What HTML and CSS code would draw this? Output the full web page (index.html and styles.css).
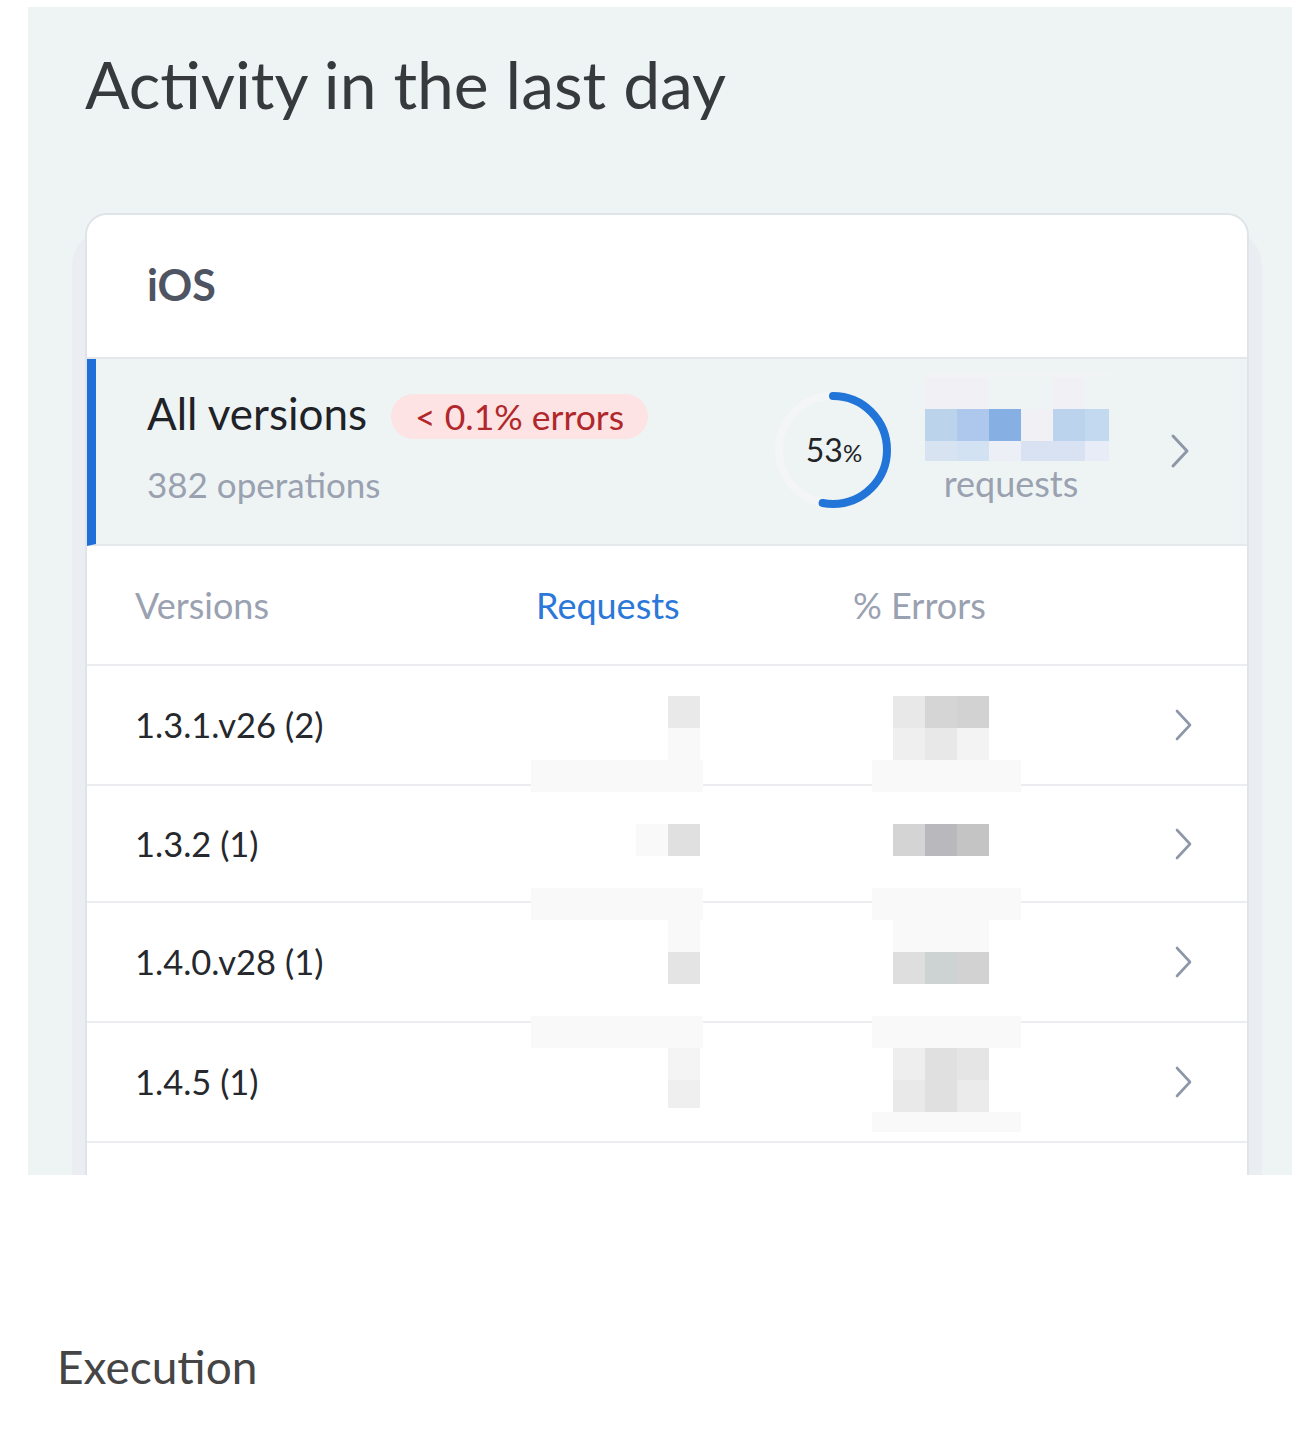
FILE: index.html
```html
<!DOCTYPE html>
<html lang="en">
<head>
<meta charset="utf-8">
<title>Activity</title>
<link rel="stylesheet" href="styles.css">
</head>
<body>
<div class="page">
  <section class="activity">
    <h1 class="activity-title">Activity in the last day</h1>

    <div class="platform-card">
      <div class="platform-head">iOS</div>

      <a class="summary" href="#">
        <div class="summary-main">
          <div class="summary-title">
            <span class="summary-name">All versions</span>
            <span class="error-pill">&lt; 0.1% errors</span>
          </div>
          <div class="summary-sub">382 operations</div>
        </div>

        <div class="donut">
          <svg class="donut-ring" width="120" height="120" viewBox="0 0 120 120">
            <circle cx="60" cy="60" r="54" fill="none" stroke="#f4f5f6" stroke-width="8"/>
            <circle cx="60" cy="60" r="54" fill="none" stroke="#2175d9" stroke-width="8"
                    stroke-linecap="round" stroke-dasharray="179.8 339.3"
                    transform="rotate(-90 60 60)"/>
          </svg>
          <span class="donut-label">53<small>%</small></span>
        </div>

        <div class="summary-requests">
          <svg class="masked" width="184" height="88" viewBox="0 0 184 88">
            <rect x="0" y="0" width="184" height="4" fill="#f1f3f4"/>
            <rect x="0" y="4" width="64" height="32" fill="#f1f1f5"/>
            <rect x="128" y="4" width="32" height="32" fill="#f1f1f5"/>
            <rect x="0" y="36" width="32" height="32" fill="#bcd3ec"/>
            <rect x="32" y="36" width="32" height="32" fill="#adc8ec"/>
            <rect x="64" y="36" width="32" height="32" fill="#86b0e3"/>
            <rect x="96" y="36" width="32" height="32" fill="#f1f1f5"/>
            <rect x="128" y="36" width="32" height="32" fill="#bbd3ec"/>
            <rect x="160" y="36" width="24" height="32" fill="#c3d9f0"/>
            <rect x="0" y="68" width="32" height="20" fill="#d8e3f2"/>
            <rect x="32" y="68" width="32" height="20" fill="#d2e2f2"/>
            <rect x="64" y="68" width="32" height="20" fill="#eceff6"/>
            <rect x="96" y="68" width="64" height="20" fill="#d8e2f2"/>
            <rect x="160" y="68" width="24" height="20" fill="#e8ecf6"/>
          </svg>
          <span class="summary-requests-label">requests</span>
        </div>

        <svg class="chevron chevron-lg" width="20" height="36" viewBox="0 0 20 36">
          <path d="M3 3 L17 18 L3 33" fill="none" stroke="#8e97a8" stroke-width="3" stroke-linecap="round" stroke-linejoin="round"/>
        </svg>
      </a>

      <div class="table-head">
        <span class="col-label">Versions</span>
        <span class="col-label col-label-active">Requests</span>
        <span class="col-label">% Errors</span>
        <span></span>
      </div>

      <a class="version-row" href="#">
        <span class="version-name">1.3.1.v26 (2)</span>
        <span class="version-value"></span>
        <span class="version-value"></span>
        <svg class="chevron" width="18" height="32" viewBox="0 0 18 32"><path d="M3 2 L16 16 L3 30" fill="none" stroke="#8e97a8" stroke-width="2.6" stroke-linecap="round" stroke-linejoin="round"/></svg>
      </a>
      <a class="version-row version-row-compact" href="#">
        <span class="version-name">1.3.2 (1)</span>
        <span class="version-value"></span>
        <span class="version-value"></span>
        <svg class="chevron" width="18" height="32" viewBox="0 0 18 32"><path d="M3 2 L16 16 L3 30" fill="none" stroke="#8e97a8" stroke-width="2.6" stroke-linecap="round" stroke-linejoin="round"/></svg>
      </a>
      <a class="version-row" href="#">
        <span class="version-name">1.4.0.v28 (1)</span>
        <span class="version-value"></span>
        <span class="version-value"></span>
        <svg class="chevron" width="18" height="32" viewBox="0 0 18 32"><path d="M3 2 L16 16 L3 30" fill="none" stroke="#8e97a8" stroke-width="2.6" stroke-linecap="round" stroke-linejoin="round"/></svg>
      </a>
      <a class="version-row" href="#">
        <span class="version-name">1.4.5 (1)</span>
        <span class="version-value"></span>
        <span class="version-value"></span>
        <svg class="chevron" width="18" height="32" viewBox="0 0 18 32"><path d="M3 2 L16 16 L3 30" fill="none" stroke="#8e97a8" stroke-width="2.6" stroke-linecap="round" stroke-linejoin="round"/></svg>
      </a>
      <div class="version-row version-row-more"></div>

      <!-- pixelated mask laid over the request / error figures -->
      <svg class="value-mask" width="1159" height="960" viewBox="0 0 1159 960" aria-hidden="true">
        <rect x="580" y="481" width="32" height="32" fill="#e9e9e9"/>
        <rect x="580" y="513" width="32" height="32" fill="#f9f9f9"/>
        <rect x="443" y="545" width="172" height="32" fill="#f9f9f9"/>
        <rect x="805" y="481" width="32" height="32" fill="#e8e8e8"/>
        <rect x="837" y="481" width="32" height="32" fill="#d5d5d5"/>
        <rect x="869" y="481" width="32" height="32" fill="#d2d2d2"/>
        <rect x="805" y="513" width="32" height="32" fill="#efefef"/>
        <rect x="837" y="513" width="32" height="32" fill="#e8e8e8"/>
        <rect x="869" y="513" width="32" height="32" fill="#f3f3f3"/>
        <rect x="784" y="545" width="149" height="32" fill="#f9f9f9"/>

        <rect x="548" y="609" width="32" height="32" fill="#f9f9f9"/>
        <rect x="580" y="609" width="32" height="32" fill="#e0e0e0"/>
        <rect x="805" y="609" width="32" height="32" fill="#d4d4d4"/>
        <rect x="837" y="609" width="32" height="32" fill="#b9b9bd"/>
        <rect x="869" y="609" width="32" height="32" fill="#c4c4c4"/>
        <rect x="443" y="673" width="172" height="32" fill="#f9f9f9"/>
        <rect x="784" y="673" width="149" height="32" fill="#f9f9f9"/>

        <rect x="580" y="705" width="32" height="32" fill="#f9f9f9"/>
        <rect x="580" y="737" width="32" height="32" fill="#e4e4e4"/>
        <rect x="805" y="705" width="96" height="32" fill="#f9f9f9"/>
        <rect x="805" y="737" width="32" height="32" fill="#dedede"/>
        <rect x="837" y="737" width="32" height="32" fill="#cdd3d3"/>
        <rect x="869" y="737" width="32" height="32" fill="#d2d2d2"/>

        <rect x="443" y="801" width="172" height="32" fill="#f9f9f9"/>
        <rect x="784" y="801" width="149" height="32" fill="#f9f9f9"/>
        <rect x="580" y="833" width="32" height="32" fill="#f4f4f4"/>
        <rect x="580" y="865" width="32" height="28" fill="#efefef"/>
        <rect x="805" y="833" width="32" height="32" fill="#eeeeee"/>
        <rect x="837" y="833" width="32" height="32" fill="#e0e0e0"/>
        <rect x="869" y="833" width="32" height="32" fill="#e5e5e5"/>
        <rect x="805" y="865" width="32" height="32" fill="#e9e9e9"/>
        <rect x="837" y="865" width="32" height="32" fill="#e0e0e0"/>
        <rect x="869" y="865" width="32" height="32" fill="#ebebeb"/>
        <rect x="784" y="897" width="149" height="20" fill="#f9f9f9"/>
      </svg>
    </div>
  </section>

  <h2 class="section-title">Execution</h2>
</div>
</body>
</html>
```

FILE: styles.css
```css
* {
  box-sizing: border-box;
}

html,
body {
  margin: 0;
  background: #ffffff;
}

body {
  font-family: Lato, "Open Sans", "Liberation Sans", sans-serif;
  color: #25282d;
}

a {
  color: inherit;
  text-decoration: none;
}

.page {
  padding: 7px 0 0 28px;
}

/* grey activity panel */
.activity {
  height: 1168px;
  overflow: hidden;
  background: #eef4f4;
  padding: 35px 0 0 57px;
}

.activity-title {
  margin: 0 0 88px;
  font-size: 66px;
  font-weight: 400;
  line-height: 83px;
  color: #363a3d;
}

/* platform card */
.platform-card {
  position: relative;
  width: 1164px;
  margin-left: 0;
  background: #ffffff;
  border: 2px solid #dfe4e8;
  border-radius: 22px;
  box-shadow: 0 30px 0 13px #eaedf1;
}

.platform-head {
  display: flex;
  align-items: center;
  height: 144px;
  padding: 0 0 3px 60px;
  font-size: 43px;
  font-weight: 700;
  color: #4e5461;
  border-bottom: 2px solid #e3e7eb;
}

/* "All versions" summary row */
.summary {
  display: flex;
  align-items: center;
  height: 187px;
  padding: 0 57px 0 51px;
  background: #eef4f4;
  border-left: 9px solid #1f6fd9;
  border-bottom: 2px solid #e6e9ec;
}

.summary-main {
  flex: 1;
  display: flex;
  flex-direction: column;
  gap: 23px;
  padding-bottom: 10px;
}

.summary-title {
  display: flex;
  align-items: center;
  gap: 24px;
}

.summary-name {
  font-size: 44px;
  line-height: 50px;
  color: #1f2227;
}

.error-pill {
  display: inline-flex;
  align-items: center;
  height: 45px;
  margin-top: 6px;
  padding: 0 24px;
  border-radius: 23px;
  background: #fde3e3;
  color: #b0272c;
  font-size: 35.5px;
  line-height: 45px;
}

.summary-sub {
  font-size: 35px;
  line-height: 44px;
  color: #9aa1b0;
}

.donut {
  position: relative;
  width: 120px;
  height: 120px;
  display: flex;
  align-items: center;
  justify-content: center;
  margin-top: -3px;
}

.donut-ring {
  position: absolute;
  inset: 0;
}

.donut-label {
  position: relative;
  font-size: 32px;
  line-height: 1;
  color: #222428;
  padding-left: 2px;
}

.donut-label small {
  font-size: 24px;
}

.summary-requests {
  display: flex;
  flex-direction: column;
  align-items: center;
  width: 184px;
  margin-left: 32px;
  margin-bottom: 26px;
}

.masked {
  display: block;
}

.summary-requests-label {
  font-size: 36px;
  line-height: 44px;
  color: #9aa1b0;
  margin-left: -12px;
}

.chevron {
  display: block;
  flex: none;
}

.chevron-lg {
  margin-left: 61px;
  margin-top: -2px;
}

/* versions table */
.table-head,
.version-row {
  display: grid;
  grid-template-columns: 401px 317px 1fr 18px;
  align-items: center;
  padding: 0 55px 0 48px;
  border-bottom: 2px solid #ebedf1;
}

.table-head {
  height: 120px;
}

.col-label {
  font-size: 36px;
  line-height: 44px;
  color: #9aa1b0;
}

.col-label-active {
  color: #2b78d8;
}

.version-row {
  height: 120px;
}

.version-row-compact {
  height: 117px;
}

.version-name {
  font-size: 34.5px;
  line-height: 44px;
  color: #25282d;
}

.version-row-more {
  height: 200px;
  border-bottom: 0;
}

.value-mask {
  position: absolute;
  left: 1px;
  top: 0;
  pointer-events: none;
}

.section-title {
  margin: 164px 0 0 29px;
  font-size: 46px;
  font-weight: 400;
  line-height: 55px;
  color: #454545;
}
```
